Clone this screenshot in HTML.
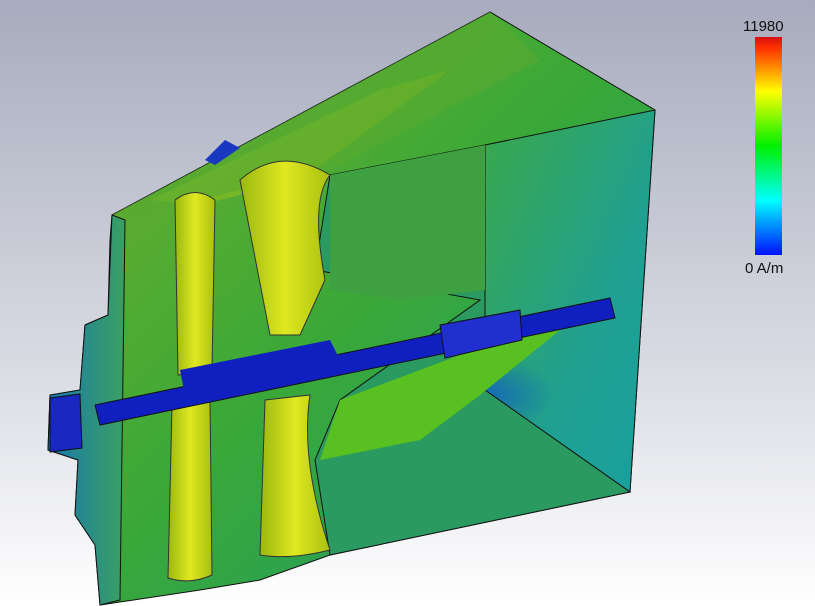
<!DOCTYPE html>
<html><head><style>
html,body{margin:0;padding:0;width:815px;height:606px;overflow:hidden}
body{background:linear-gradient(#a7abbd,#d9dbe3 60%,#ffffff);font-family:"Liberation Sans",sans-serif}
.t{position:absolute;font-size:15px;color:#111}
</style></head><body>
<svg width="815" height="606" style="position:absolute;left:0;top:0">
<defs>
<linearGradient id="bar" x1="0" y1="0" x2="0" y2="1">
<stop offset="0" stop-color="#d81010"/><stop offset="0.05" stop-color="#ff3000"/><stop offset="0.25" stop-color="#ffff00"/><stop offset="0.5" stop-color="#00f000"/><stop offset="0.75" stop-color="#00ffff"/><stop offset="1" stop-color="#0010ff"/>
</linearGradient>
<linearGradient id="gbody" x1="0" y1="0" x2="1" y2="1">
<stop offset="0" stop-color="#78b028"/><stop offset="0.5" stop-color="#3aa838"/><stop offset="1" stop-color="#1a9a70"/>
</linearGradient>
<linearGradient id="right" x1="0" y1="0" x2="1" y2="1">
<stop offset="0" stop-color="#3aa84a"/><stop offset="0.6" stop-color="#20a090"/><stop offset="1" stop-color="#18a0a0"/>
</linearGradient>
<radialGradient id="bl" cx="0.5" cy="0.5" r="0.5">
<stop offset="0" stop-color="#1060c0" stop-opacity="0.9"/><stop offset="1" stop-color="#1060c0" stop-opacity="0"/>
</radialGradient>
<linearGradient id="yel" x1="0" y1="0" x2="1" y2="0">
<stop offset="0" stop-color="#9ab810"/><stop offset="0.5" stop-color="#e0e820"/><stop offset="1" stop-color="#a8c010"/>
</linearGradient>
<linearGradient id="left" x1="0" y1="0" x2="1" y2="0">
<stop offset="0" stop-color="#1878b0"/><stop offset="1" stop-color="#3aa060"/>
</linearGradient>
</defs>
<polygon points="112,215 490,12 655,110 630,492 330,555 260,580 200,590 100,605 95,545 75,515 78,460 48,450 50,395 80,390 85,325 108,315 110,240" fill="url(#gbody)" stroke="#111"/>
<polygon points="150,200 380,90 450,70 300,180 200,205" fill="#90c020" opacity="0.6"/>
<polygon points="112,215 490,12 540,60 330,170 240,190 180,205 120,225" fill="#58aa30" opacity="0.6"/>
<polygon points="485,145 655,110 630,492 485,390" fill="url(#right)" stroke="#111"/>
<ellipse cx="485" cy="395" rx="70" ry="40" fill="url(#bl)"/>
<polygon points="330,175 485,145 485,390 630,492 330,555 315,460 340,400 480,300 315,270" fill="#2a9a60" stroke="#111"/>
<polygon points="330,175 485,145 485,290 400,300 330,290" fill="#3ea040"/>
<polygon points="320,460 340,400 500,340 560,330 480,395 420,440" fill="#58c020"/>
<polygon points="112,215 125,220 120,600 100,605 95,545 75,515 78,460 48,450 50,395 80,390 85,325 108,315" fill="url(#left)" stroke="#111"/>
<path d="M175,200 Q195,185 215,200 L212,370 L178,375 Z" fill="url(#yel)" stroke="#333"/>
<path d="M240,180 Q280,145 330,175 Q310,200 325,280 L300,335 L270,335 Z" fill="url(#yel)" stroke="#333"/>
<path d="M172,405 L210,400 L212,575 Q190,585 168,578 Z" fill="url(#yel)" stroke="#333"/>
<path d="M265,400 L310,395 Q300,460 330,550 Q290,560 260,555 Z" fill="url(#yel)" stroke="#333"/>
<polygon points="95,405 610,298 615,318 100,425" fill="#1020c0" stroke="#111"/>
<polygon points="180,370 330,340 340,360 185,395" fill="#1020c0"/>
<polygon points="440,325 520,310 522,340 445,358" fill="#2030d0" stroke="#111"/>
<polygon points="50,398 80,394 82,448 50,452" fill="#1828c0" stroke="#111"/>
<polygon points="205,160 225,140 240,148 215,165" fill="#1838c0"/>
<rect x="755" y="37" width="27" height="218" fill="url(#bar)"/>
</svg>
<div class="t" style="left:743px;top:18px">11980</div>
<div class="t" style="left:745px;top:260px">0 A/m</div>
</body></html>
